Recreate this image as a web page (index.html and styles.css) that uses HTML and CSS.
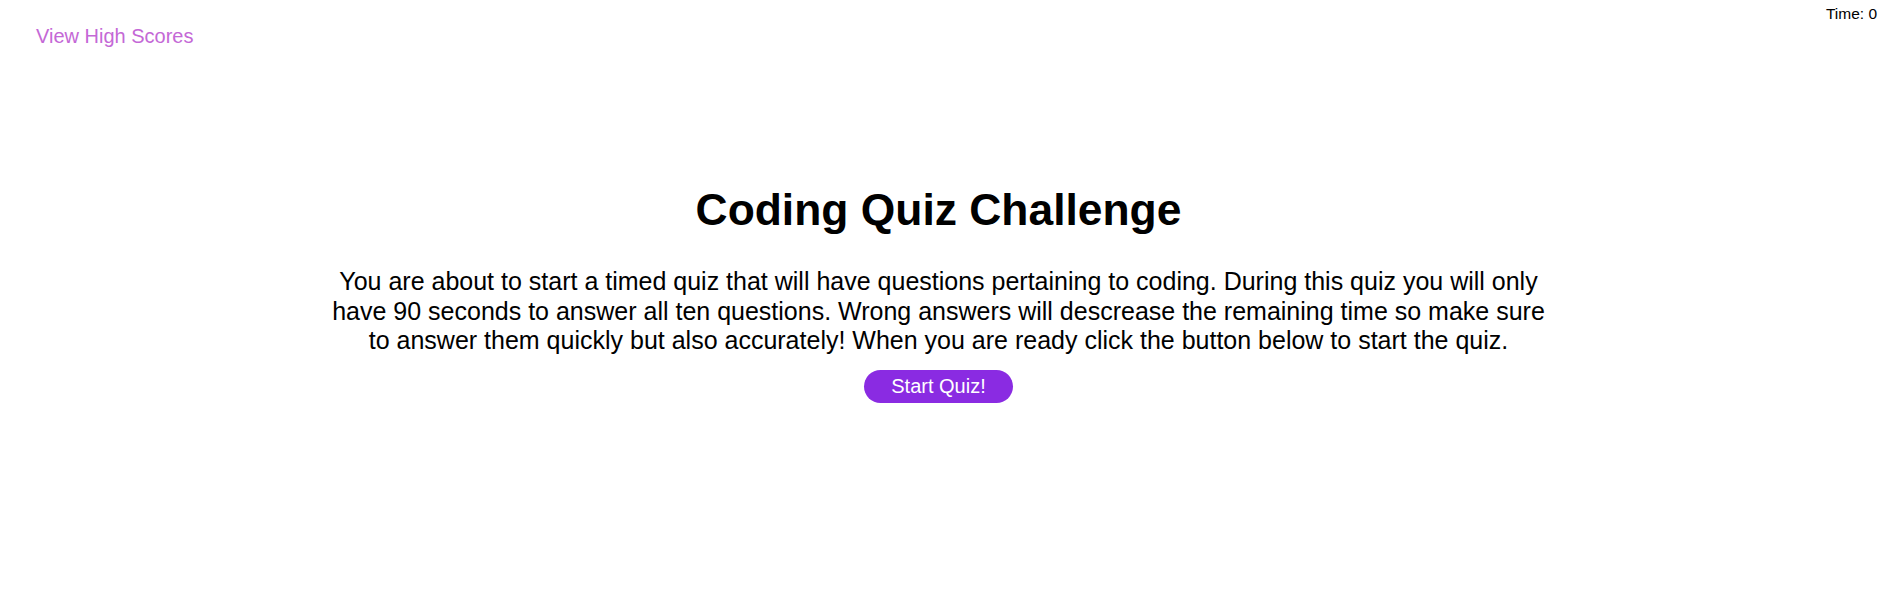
FILE: index.html
```html
<!DOCTYPE html>
<html lang="en">
<head>
<meta charset="utf-8">
<title>Coding Quiz Challenge</title>
<link rel="stylesheet" href="styles.css">
</head>
<body>
<div class="page">
  <header class="top-bar">
    <a class="high-scores" href="#">View High Scores</a>
    <div class="timer">Time: <span class="timer-value">0</span></div>
  </header>
  <main class="intro">
    <h1 class="intro-title">Coding Quiz Challenge</h1>
    <p class="intro-text">You are about to start a timed quiz that will have questions pertaining to coding. During this quiz you will only have 90 seconds to answer all ten questions. Wrong answers will descrease the remaining time so make sure to answer them quickly but also accurately! When you are ready click the button below to start the quiz.</p>
    <button class="start-btn" type="button">Start Quiz!</button>
  </main>
</div>
</body>
</html>
```
FILE: styles.css
```css
html, body {
  margin: 0;
  padding: 0;
  background: #ffffff;
}

body {
  font-family: "Liberation Sans", Arial, sans-serif;
  color: #000000;
}

.page {
  margin-right: 15px;
}

.top-bar {
  display: flex;
  justify-content: space-between;
  align-items: flex-start;
}

.high-scores {
  margin-top: 25px;
  padding-left: 36px;
  font-size: 20px;
  line-height: 23px;
  color: #c468d6;
  text-decoration: none;
}

.timer {
  margin-top: 5px;
  font-size: 15.5px;
  line-height: 18px;
}

.intro {
  display: flex;
  flex-direction: column;
  align-items: center;
  padding-top: 137px;
}

.intro-title {
  margin: 0;
  font-size: 44.4px;
  line-height: 50px;
  font-weight: bold;
}

.intro-text {
  margin: 32px 0 0;
  max-width: 1230px;
  font-size: 25px;
  line-height: 29.5px;
  text-align: center;
}

.start-btn {
  margin-top: 14px;
  padding: 5px 27px;
  border: none;
  border-radius: 20px;
  background: #8a2be2;
  color: #ffffff;
  font-family: "Liberation Sans", Arial, sans-serif;
  font-size: 20px;
  line-height: 23px;
  cursor: pointer;
}
```
